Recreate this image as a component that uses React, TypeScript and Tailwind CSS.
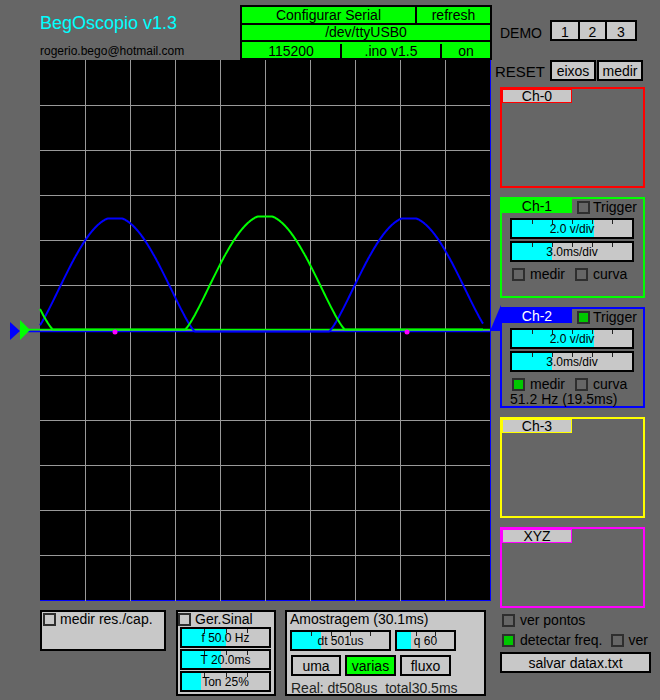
import React from "react";

// little helpers for the processing-style widgets
const Check = ({ on = false }: { on?: boolean }) => (
  <div
    className={`w-[13px] h-[13px] shrink-0 border-2 border-[#2e2e2e] ${on ? "bg-[#00c800]" : ""}`}
  />
);

const Slider = ({
  label,
  pct,
  ticks,
  className,
}: {
  label: string;
  pct: number;
  ticks: number;
  className: string;
}) => (
  <div
    className={`relative h-[21px] border-2 border-black bg-[#c8c8c8] flex items-center justify-center ${className}`}
  >
    <div className="absolute left-0 top-0 bottom-0 bg-[#00ffff]" style={{ width: `${pct}%` }} />
    {Array.from({ length: ticks - 1 }).map((_, i) => (
      <div
        key={i}
        className="absolute top-0 w-px h-[4px] bg-[#222]"
        style={{ left: `${((i + 1) / ticks) * 100}%` }}
      />
    ))}
    <span className="relative text-[12px] leading-[12px]">{label}</span>
  </div>
);

const Btn = ({ children, className }: { children: React.ReactNode; className: string }) => (
  <div
    className={`h-[21px] border-2 border-black flex items-center justify-center pt-[1px] text-[14px] leading-[14px] ${className}`}
  >
    {children}
  </div>
);

// waveform lobes
const lobe = (x: number, peaks: number[]) => {
  let best = 0;
  for (const p of peaks) {
    const d = Math.abs(x - p);
    if (d < 80) best = Math.max(best, Math.pow(Math.cos(((Math.PI / 2) * d) / 80), 1.25));
  }
  return Math.min(113, 114.5 * best);
};

const trace = (base: number, peaks: number[]) => {
  const pts: string[] = [];
  for (let x = 40; x <= 483; x++) pts.push(`${x},${(base - lobe(x, peaks)).toFixed(1)}`);
  return pts.join(" ");
};

const Scope = () => {
  const vx = [1, 2, 3, 4, 5, 6, 7, 8, 9];
  const hy = [1, 2, 3, 4, 5, 6, 7, 8, 9, 10, 11];
  return (
    <svg width="495" height="541" className="block overflow-visible">
      <rect x="40" y="0" width="451" height="541" fill="#000" />
      <line x1="490.5" y1="0" x2="490.5" y2="541" stroke="#0000ff" />
      <line x1="40" y1="540.5" x2="491" y2="540.5" stroke="#0000ff" />
      {vx.map((k) => (
        <line key={"v" + k} x1={40 + 45 * k + 0.5} y1="0" x2={40 + 45 * k + 0.5} y2="541" stroke="#999" />
      ))}
      {hy.map((k) => (
        <line key={"h" + k} x1="40" y1={45 * k + 0.5} x2="490" y2={45 * k + 0.5} stroke="#999" />
      ))}
      {/* zero lines */}
      <line x1="20" y1="271.5" x2="490" y2="271.5" stroke="#0000ff" strokeWidth="1.5" />
      <line x1="20" y1="269.5" x2="490" y2="269.5" stroke="#00ff00" strokeWidth="1.5" />
      <polyline points={trace(271.5, [115, 409])} fill="none" stroke="#0000ff" strokeWidth="2" />
      <polyline points={trace(269.5, [-27, 265])} fill="none" stroke="#00ff00" strokeWidth="2" />
      <circle cx="115" cy="272" r="2.5" fill="#ff00ff" />
      <circle cx="407" cy="272" r="2.5" fill="#ff00ff" />
      {/* trigger markers */}
      <polygon points="10,262 20,271 10,280" fill="#0000ff" />
      <polygon points="20,260 30,270 20,280" fill="#00ff00" />
      <polygon points="490,271 501,245 501,271" fill="#0000ff" />
    </svg>
  );
};

const ChannelBox = ({
  border,
  tab,
  h,
  children,
}: {
  border: string;
  tab: React.ReactNode;
  h: string;
  children?: React.ReactNode;
}) => (
  <div className={`ml-[5px] w-[145px] border-2 ${border} ${h}`}>
    {tab}
    {children}
  </div>
);

const ChControls = ({ on, freq }: { on: boolean; freq?: string }) => (
  <>
    <Slider label="2.0 v/div" pct={68} ticks={6} className="ml-[8px] mt-[5px] w-[124px]" />
    <Slider label="3.0ms/div" pct={33} ticks={6} className="ml-[8px] mt-[2px] w-[124px]" />
    <div className="mt-[5px] h-[14px] flex items-center text-[14px] leading-[14px]">
      <div className="ml-[10px]">
        <Check on={on} />
      </div>
      <span className="ml-[5px]">medir</span>
      <div className="ml-[10px]">
        <Check />
      </div>
      <span className="ml-[5px]">curva</span>
    </div>
    {freq && <div className="ml-[8px] mt-px text-[14px] leading-[14px] text-black">{freq}</div>}
  </>
);

const TabRow = ({ tab, trig }: { tab: React.ReactNode; trig: boolean }) => (
  <div className="flex h-[14px]">
    {tab}
    <div className="ml-[5px] mt-[2px]">
      <Check on={trig} />
    </div>
    <span className="ml-[3px] pt-[1px] text-[14px] leading-[14px]">Trigger</span>
  </div>
);

export default function App() {
  return (
    <div className="w-[660px] h-[700px] bg-[#666666] flex overflow-hidden font-['Liberation_Sans',sans-serif] text-black">
      {/* left column */}
      <div className="w-[495px] flex flex-col">
        <div className="h-[60px] flex">
          <div className="w-[240px] pl-[40px] pt-[14px]">
            <div className="text-[18px] leading-[18px] text-[#00ffff]">BegOscopio v1.3</div>
            <div className="mt-[13px] text-[12px] leading-[12px]">rogerio.bego@hotmail.com</div>
          </div>
          <div className="mt-[5px] w-[252px] h-[55px] border-2 border-black bg-[#00ff00] flex flex-col text-[14px] leading-[14px]">
            <div className="h-[18px] flex border-b-2 border-black">
              <div className="w-[175px] border-r-2 border-black flex items-center justify-center">
                Configurar Serial
              </div>
              <div className="flex-1 flex items-center justify-center">refresh</div>
            </div>
            <div className="h-[18px] flex items-center justify-center border-b-2 border-black">
              /dev/ttyUSB0
            </div>
            <div className="flex-1 flex pt-[2px]">
              <div className="w-[100px] border-r-2 border-black flex items-center justify-center">115200</div>
              <div className="w-[100px] border-r-2 border-black flex items-center justify-center">.ino v1.5</div>
              <div className="flex-1 flex items-center justify-center">on</div>
            </div>
          </div>
        </div>

        <Scope />

        <div className="mt-[9px] flex items-start">
          <div className="ml-[40px] w-[126px] h-[41px] border-2 border-black bg-[#c8c8c8]">
            <div className="flex items-center h-[14px] text-[14px] leading-[14px]">
              <div className="ml-px">
                <Check />
              </div>
              <span className="ml-[4px]">medir res./cap.</span>
            </div>
          </div>

          <div className="ml-[10px] w-[100px] h-[86px] border-2 border-black bg-[#c8c8c8] flex flex-col">
            <div className="flex items-center h-[14px] text-[14px] leading-[14px]">
              <Check />
              <span className="ml-[4px]">Ger.Sinal</span>
            </div>
            <Slider label="f 50.0 Hz" pct={51} ticks={4} className="ml-[2px] mt-px w-[91px]" />
            <Slider label="T 20.0ms" pct={45} ticks={4} className="ml-[2px] mt-px w-[91px]" />
            <Slider label="Ton 25%" pct={22} ticks={4} className="ml-[2px] mt-px w-[91px]" />
          </div>

          <div className="ml-[9px] w-[201px] h-[86px] border-2 border-black bg-[#c8c8c8] flex flex-col text-[14px] leading-[14px]">
            <div className="pl-[3px]">Amostragem (30.1ms)</div>
            <div className="mt-[4px] flex">
              <Slider label="dt 501us" pct={30} ticks={5} className="ml-[3px] w-[101px]" />
              <Slider label="q 60" pct={25} ticks={3} className="ml-[4px] w-[61px]" />
            </div>
            <div className="mt-[4px] flex">
              <Btn className="ml-[4px] w-[50px] bg-[#c8c8c8]">uma</Btn>
              <Btn className="ml-[4px] w-[51px] bg-[#00ff00]">varias</Btn>
              <Btn className="ml-[4px] w-[51px] bg-[#c8c8c8]">fluxo</Btn>
            </div>
            <div className="mt-[5px] pl-[4px] text-[#1e241e] whitespace-pre">Real: dt508us  total30.5ms</div>
          </div>
        </div>
      </div>

      {/* right column */}
      <div className="w-[165px] flex flex-col text-[14px] leading-[14px]">
        <div className="mt-[20px] h-[21px] flex items-center">
          <span className="w-[55px] pl-[5px] pt-[4px]">DEMO</span>
          <div className="h-[21px] flex border-2 border-black bg-[#c8c8c8]">
            <div className="w-[28px] border-r-2 border-black flex items-center justify-center pt-[3px]">1</div>
            <div className="w-[27px] border-r-2 border-black flex items-center justify-center pt-[3px]">2</div>
            <div className="w-[28px] flex items-center justify-center pt-[3px]">3</div>
          </div>
        </div>

        <div className="mt-[19px] h-[21px] flex items-center">
          <span className="w-[55px] text-[15px] leading-[15px] pt-[2px]">RESET</span>
          <Btn className="w-[46px] bg-[#c8c8c8]">eixos</Btn>
          <Btn className="ml-px w-[46px] bg-[#c8c8c8]">medir</Btn>
        </div>

        <div className="mt-[6px]">
          <ChannelBox
            border="border-[#ff0000]"
            h="h-[101px]"
            tab={
              <div className="w-[70px] h-[14px] border border-[#ff0000] bg-[#c8c8c8] flex items-center justify-center">
                Ch-0
              </div>
            }
          />
        </div>

        <div className="mt-[9px]">
          <ChannelBox
            border="border-[#00ff00]"
            h="h-[101px]"
            tab={
              <TabRow
                trig={false}
                tab={
                  <div className="w-[70px] h-[14px] bg-[#00ff00] flex items-center justify-center">Ch-1</div>
                }
              />
            }
          >
            <ChControls on={false} />
          </ChannelBox>
        </div>

        <div className="mt-[9px]">
          <ChannelBox
            border="border-[#0000ff]"
            h="h-[101px]"
            tab={
              <TabRow
                trig={true}
                tab={
                  <div className="w-[70px] h-[14px] bg-[#0000ff] text-white flex items-center justify-center">
                    Ch-2
                  </div>
                }
              />
            }
          >
            <ChControls on={true} freq="51.2 Hz (19.5ms)" />
          </ChannelBox>
        </div>

        <div className="mt-[9px]">
          <ChannelBox
            border="border-[#ffff00]"
            h="h-[101px]"
            tab={
              <div className="w-[70px] h-[14px] border border-[#ffff00] bg-[#c8c8c8] flex items-center justify-center">
                Ch-3
              </div>
            }
          />
        </div>

        <div className="mt-[9px]">
          <ChannelBox
            border="border-[#ff00ff]"
            h="h-[81px]"
            tab={
              <div className="w-[70px] h-[14px] border border-[#ff00ff] bg-[#c8c8c8] flex items-center justify-center">
                XYZ
              </div>
            }
          />
        </div>

        <div className="mt-[5px] h-[14px] flex items-center">
          <div className="ml-[7px]">
            <Check />
          </div>
          <span className="ml-[5px]">ver pontos</span>
        </div>

        <div className="mt-[6px] h-[14px] flex items-center">
          <div className="ml-[7px]">
            <Check on={true} />
          </div>
          <span className="ml-[5px]">detectar freq.</span>
          <div className="ml-[8px]">
            <Check />
          </div>
          <span className="ml-[5px]">ver</span>
        </div>

        <Btn className="mt-[5px] ml-[5px] w-[151px] bg-[#c8c8c8]">salvar datax.txt</Btn>
      </div>
    </div>
  );
}
